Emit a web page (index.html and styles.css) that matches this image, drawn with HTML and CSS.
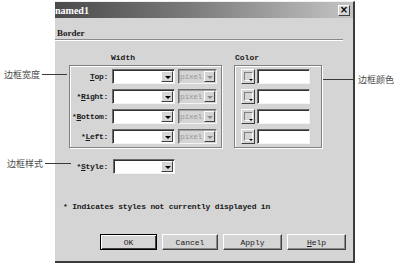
FILE: index.html
```html
<!DOCTYPE html>
<html>
<head>
<meta charset="utf-8">
<link rel="stylesheet" href="styles.css">
</head>
<body>
<div class="stage">
  <div class="dialog">
    <div class="titlebar">
      <span class="title">named1</span>
      <span class="close">&#215;</span>
    </div>
    <div class="body">
      <div class="section">Border</div>
      <div class="sep"></div>
      <div class="heads">
        <span class="head-width">Width</span>
        <span class="head-color">Color</span>
      </div>
      <div class="boxes">
        <div class="group width-group">
          <div class="row">
            <label class="lbl"><u>T</u>op:</label>
            <div class="select"><span class="field"></span><span class="arrow"></span></div>
            <div class="select disabled"><span class="field">pixel</span><span class="arrow"></span></div>
          </div>
          <div class="row">
            <label class="lbl">*<u>R</u>ight:</label>
            <div class="select"><span class="field"></span><span class="arrow"></span></div>
            <div class="select disabled"><span class="field">pixel</span><span class="arrow"></span></div>
          </div>
          <div class="row">
            <label class="lbl">*<u>B</u>ottom:</label>
            <div class="select"><span class="field"></span><span class="arrow"></span></div>
            <div class="select disabled"><span class="field">pixel</span><span class="arrow"></span></div>
          </div>
          <div class="row">
            <label class="lbl">*<u>L</u>eft:</label>
            <div class="select"><span class="field"></span><span class="arrow"></span></div>
            <div class="select disabled"><span class="field">pixel</span><span class="arrow"></span></div>
          </div>
        </div>
        <div class="group color-group">
          <div class="crow"><span class="swatch"><i></i></span><span class="cinput"></span></div>
          <div class="crow"><span class="swatch"><i></i></span><span class="cinput"></span></div>
          <div class="crow"><span class="swatch"><i></i></span><span class="cinput"></span></div>
          <div class="crow"><span class="swatch"><i></i></span><span class="cinput"></span></div>
        </div>
      </div>
      <div class="style-row">
        <label class="lbl">*<u>S</u>tyle:</label>
        <div class="select"><span class="field"></span><span class="arrow"></span></div>
      </div>
      <div class="note">* Indicates styles not currently displayed in</div>
      <div class="buttons">
        <button class="btn default">OK</button>
        <button class="btn">Cancel</button>
        <button class="btn">Apply</button>
        <button class="btn"><u>H</u>elp</button>
      </div>
    </div>
  </div>

  <div class="callout c-width"><span class="ctext">边框宽度</span><span class="cline"></span></div>
  <div class="callout c-style"><span class="ctext">边框样式</span><span class="cline"></span></div>
  <div class="callout c-color"><span class="cline"></span><span class="ctext">边框颜色</span></div>
</div>
</body>
</html>
```

FILE: styles.css
```css
* { box-sizing: border-box; }

html, body {
  margin: 0;
  padding: 0;
  background: #ffffff;
}

.stage {
  position: relative;
  width: 400px;
  height: 265px;
  overflow: hidden;
  font-family: "Liberation Mono", "DejaVu Sans Mono", monospace;
  font-size: 8px;
  color: #1a1a1a;
}

.dialog {
  margin-left: 55px;
  margin-top: 1px;
  width: 300px;
  height: 262px;
  background: #d5d5d5;
  border-top: 1px solid #f0f0f0;
  border-right: 2px solid #3c3c3c;
  border-bottom: 2px solid #3c3c3c;
  display: flex;
  flex-direction: column;
}

.titlebar {
  height: 16px;
  background: linear-gradient(to right, #4a4a4a 0%, #7a7a7a 45%, #c4c4c4 100%);
  display: flex;
  align-items: center;
  justify-content: space-between;
  padding-right: 3px;
}

.title {
  font-family: "Liberation Serif", serif;
  font-weight: bold;
  font-size: 10px;
  color: #ffffff;
}

.close {
  width: 12px;
  height: 11px;
  background: #d5d5d5;
  border-top: 1px solid #ffffff;
  border-left: 1px solid #ffffff;
  border-right: 1px solid #404040;
  border-bottom: 1px solid #404040;
  font-family: "DejaVu Sans", sans-serif;
  font-weight: bold;
  font-size: 10px;
  line-height: 8px;
  text-align: center;
  color: #000;
}

.body {
  flex: 1;
  display: flex;
  flex-direction: column;
}

.section {
  margin-top: 10px;
  padding-left: 2px;
  height: 11px;
  line-height: 11px;
  font-family: "Liberation Serif", serif;
  font-weight: bold;
  font-size: 9px;
}

.sep {
  width: 288px;
  height: 2px;
  border-top: 1px solid #8a8a8a;
  border-bottom: 1px solid #ffffff;
}

.heads {
  margin-top: 12px;
  height: 10px;
  line-height: 10px;
  display: flex;
  font-weight: bold;
}

.head-width { margin-left: 56px; width: 124px; }

.boxes {
  margin-top: 2px;
  margin-left: 14px;
  display: flex;
  gap: 12px;
}

.group {
  height: 83px;
  border: 1px solid #808080;
  box-shadow: inset 1px 1px 0 #ffffff, 1px 1px 0 #ffffff;
  padding: 3px 0 0 0;
  display: flex;
  flex-direction: column;
  gap: 5px;
}

.width-group { width: 153px; }
.color-group { width: 88px; padding-left: 6px; }

.row, .style-row {
  display: flex;
  align-items: center;
  height: 15px;
}

.lbl {
  width: 42px;
  text-align: right;
  padding-right: 4px;
  font-weight: bold;
  white-space: nowrap;
  letter-spacing: -0.3px;
}

.select {
  height: 15px;
  width: 63px;
  display: flex;
  background: #ffffff;
  border-top: 1px solid #6a6a6a;
  border-left: 1px solid #6a6a6a;
  border-right: 1px solid #f4f4f4;
  border-bottom: 1px solid #f4f4f4;
  box-shadow: inset 1px 1px 0 #303030;
}

.select .field {
  flex: 1;
  padding-left: 3px;
  line-height: 13px;
  overflow: hidden;
  white-space: nowrap;
}

.select .arrow {
  width: 12px;
  margin: 1px 1px 1px 0;
  background: #d5d5d5;
  border-top: 1px solid #ffffff;
  border-left: 1px solid #ffffff;
  border-right: 1px solid #404040;
  border-bottom: 1px solid #404040;
  position: relative;
}

.select .arrow::after {
  content: "";
  position: absolute;
  left: 3px;
  top: 4px;
  border-left: 3px solid transparent;
  border-right: 3px solid transparent;
  border-top: 3px solid #000;
}

.select.disabled {
  width: 39px;
  margin-left: 3px;
  background: #d5d5d5;
  color: #9a9a9a;
  box-shadow: inset 1px 1px 0 #a0a0a0;
}

.select.disabled .field {
  padding-left: 1px;
  letter-spacing: -0.4px;
}

.select.disabled .arrow { width: 11px; }
.select.disabled .arrow::after { left: 2px; border-top-color: #8a8a8a; }

.crow {
  display: flex;
  align-items: center;
  height: 15px;
  gap: 2px;
}

.swatch {
  width: 14px;
  height: 15px;
  background: #d5d5d5;
  border-top: 1px solid #ffffff;
  border-left: 1px solid #ffffff;
  border-right: 1px solid #404040;
  border-bottom: 1px solid #404040;
  position: relative;
}

.swatch::before {
  content: "";
  position: absolute;
  left: 2px;
  top: 2px;
  width: 7px;
  height: 7px;
  border: 1px solid #808080;
  border-right-color: #ffffff;
  border-bottom-color: #ffffff;
}

.swatch i {
  position: absolute;
  left: 7px;
  top: 9px;
  border-left: 2px solid transparent;
  border-right: 2px solid transparent;
  border-top: 2px solid #000;
}

.cinput {
  width: 53px;
  height: 15px;
  background: #ffffff;
  border-top: 1px solid #6a6a6a;
  border-left: 1px solid #6a6a6a;
  border-right: 1px solid #f4f4f4;
  border-bottom: 1px solid #f4f4f4;
  box-shadow: inset 1px 1px 0 #303030;
}

.style-row {
  margin-top: 11px;
  margin-left: 15px;
}

.style-row .select { margin-left: 1px; width: 62px; }

.note {
  margin-top: 28px;
  margin-left: 8px;
  height: 10px;
  line-height: 10px;
  font-weight: bold;
  letter-spacing: -0.2px;
}

.buttons {
  margin-top: 22px;
  margin-left: 45px;
  display: flex;
  gap: 5px;
}

.btn {
  height: 16px;
  width: 57px;
  padding: 0;
  background: #d5d5d5;
  font-family: "Liberation Mono", monospace;
  font-size: 8px;
  color: #1a1a1a;
  border-top: 1px solid #ffffff;
  border-left: 1px solid #ffffff;
  border-right: 1px solid #404040;
  border-bottom: 1px solid #404040;
  box-shadow: inset -1px -1px 0 #8a8a8a;
}

.btn:nth-child(2) { width: 56px; }
.btn:nth-child(3), .btn:nth-child(4) { width: 59px; }

.btn.default {
  border: 1px solid #000000;
  box-shadow: inset 1px 1px 0 #ffffff, inset -1px -1px 0 #404040;
}

.callout {
  position: absolute;
  display: flex;
  align-items: center;
  font-family: "Noto Sans CJK SC", "Noto Sans", sans-serif;
  font-size: 9px;
  color: #4a4a4a;
  height: 12px;
}

.cline {
  display: block;
  height: 1px;
  background: #3a3a3a;
}

.c-width { left: 4px; top: 68px; }
.c-width .cline { width: 25px; margin-left: 2px; }

.c-style { left: 7px; top: 157px; }
.c-style .cline { width: 26px; margin-left: 2px; }

.c-color { left: 323px; top: 73px; }
.c-color .cline { width: 32px; margin-right: 3px; }
```
